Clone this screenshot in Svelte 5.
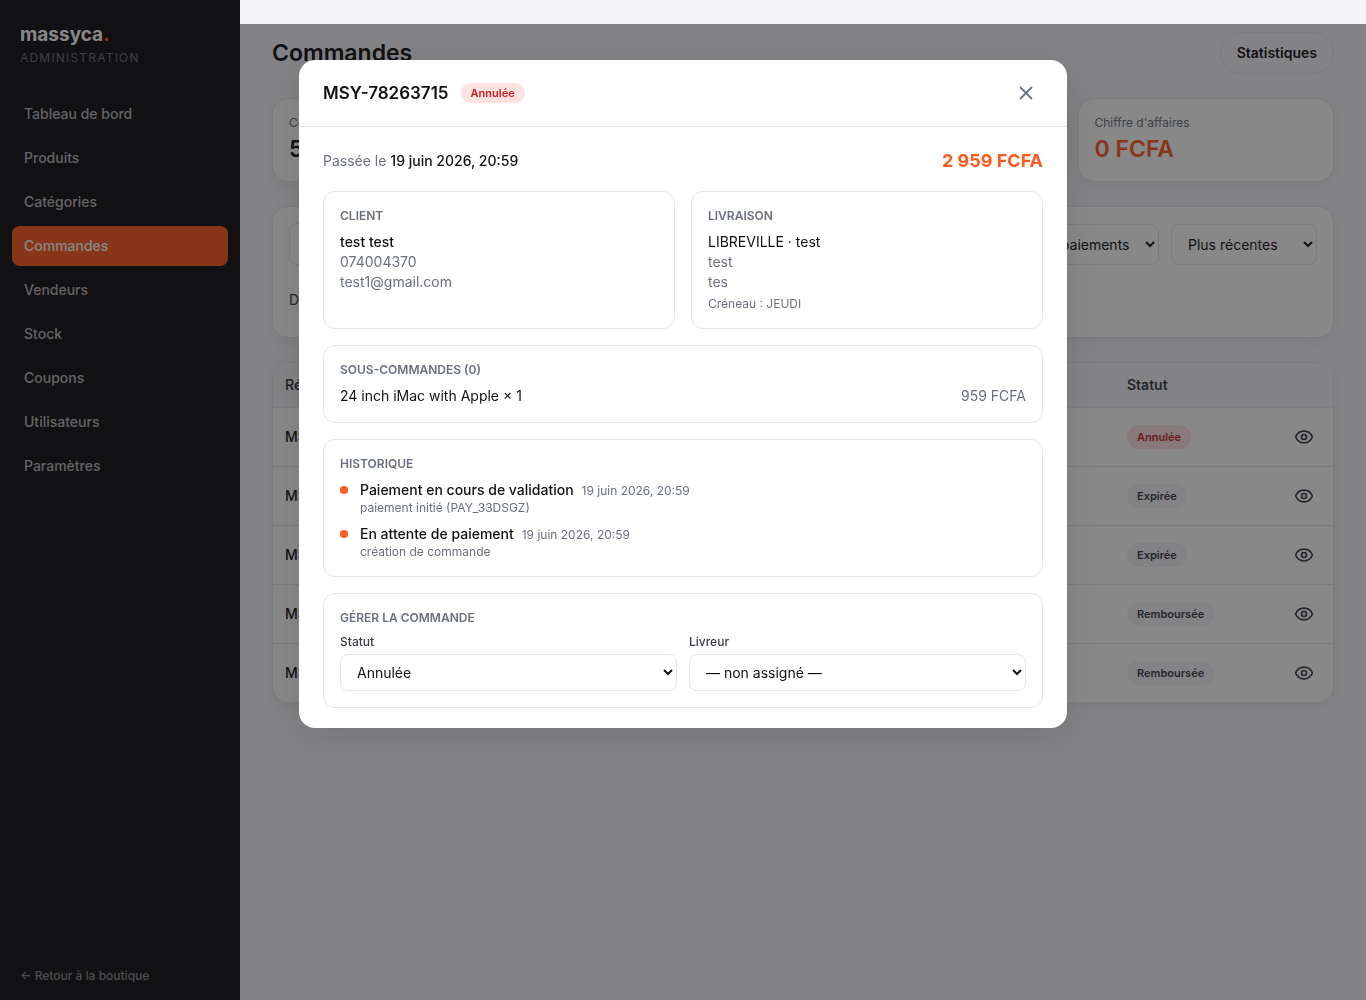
<script lang="ts">
	const navItems = [
		'Tableau de bord',
		'Produits',
		'Catégories',
		'Commandes',
		'Vendeurs',
		'Stock',
		'Coupons',
		'Utilisateurs',
		'Paramètres'
	];

	const stats = [
		{ label: 'Commandes', value: '5' },
		{ label: 'En attente', value: '0' },
		{ label: 'Livrées', value: '0' },
		{ label: "Chiffre d'affaires", value: '0 FCFA', accent: true }
	];

	const orders = [
		{ ref: 'MSY-78263715', client: 'test test', status: 'Annulée', danger: true },
		{ ref: 'MSY-78263702', client: 'test test', status: 'Expirée' },
		{ ref: 'MSY-78263698', client: 'test test', status: 'Expirée' },
		{ ref: 'MSY-78263684', client: 'test test', status: 'Remboursée' },
		{ ref: 'MSY-78263671', client: 'test test', status: 'Remboursée' }
	];

	const history = [
		{ label: 'Paiement en cours de validation', date: '19 juin 2026, 20:59', note: 'paiement initié (PAY_33DSGZ)' },
		{ label: 'En attente de paiement', date: '19 juin 2026, 20:59', note: 'création de commande' }
	];

	let active = $state('Commandes');
	let showOrder = $state(true);
	let status = $state('Annulée');
	let courier = $state('');
</script>

<div class="layout">
	<aside class="sidebar">
		<div class="brand">
			<div class="logo">massyca<span>.</span></div>
			<div class="role">Administration</div>
		</div>
		<nav>
			{#each navItems as item}
				<a href="#{item}" class:active={item === active} onclick={() => (active = item)}>{item}</a>
			{/each}
		</nav>
		<a class="back" href="#boutique">← Retour à la boutique</a>
	</aside>

	<main>
		<header class="page-head">
			<h1>Commandes</h1>
			<button class="stats-btn">Statistiques</button>
		</header>

		<section class="stats">
			{#each stats as stat}
				<div class="panel stat">
					<div class="stat-label">{stat.label}</div>
					<div class="stat-value" class:accent={stat.accent}>{stat.value}</div>
				</div>
			{/each}
		</section>

		<section class="panel filters">
			<div class="filter-row">
				<input class="search" type="search" aria-label="Rechercher" />
				<select aria-label="Statut de commande"><option>Tous les statuts</option></select>
				<select aria-label="Paiement"><option>Tous les paiements</option></select>
				<select aria-label="Tri"><option>Plus récentes</option></select>
			</div>
			<div class="filter-row dates">
				<label for="from">Du</label>
				<input id="from" type="date" />
				<label for="to">au</label>
				<input id="to" type="date" />
			</div>
		</section>

		<section class="panel table-wrap">
			<table>
				<thead>
					<tr>
						<th>Référence</th>
						<th class="col-client">Client</th>
						<th class="col-status">Statut</th>
						<th class="col-action"></th>
					</tr>
				</thead>
				<tbody>
					{#each orders as order}
						<tr>
							<td><div class="ref" title={order.ref}>{order.ref}</div></td>
							<td>{order.client}</td>
							<td><span class="badge tall" class:danger={order.danger}>{order.status}</span></td>
							<td class="action">
								<button class="eye" aria-label="Voir la commande" onclick={() => (showOrder = true)}>
									<svg width="20" height="20" viewBox="0 0 24 24">
										<path d="M2.06 12.35a1 1 0 0 1 0-.7 10.75 10.75 0 0 1 19.88 0 1 1 0 0 1 0 .7 10.75 10.75 0 0 1-19.88 0" />
										<circle cx="12" cy="12" r="3" />
									</svg>
								</button>
							</td>
						</tr>
					{/each}
				</tbody>
			</table>
		</section>
	</main>
</div>

{#if showOrder}
	<div class="overlay">
		<div class="modal" role="dialog" aria-modal="true" aria-labelledby="order-title">
			<header class="modal-head">
				<h2 id="order-title">MSY-78263715</h2>
				<span class="badge danger">Annulée</span>
				<button class="close" aria-label="Fermer" onclick={() => (showOrder = false)}>
					<svg width="22" height="22" viewBox="0 0 24 24"><path d="M18 6 6 18M6 6l12 12" /></svg>
				</button>
			</header>

			<div class="modal-body">
				<div class="summary">
					<p>Passée le <strong>19 juin 2026, 20:59</strong></p>
					<span class="amount">2 959 FCFA</span>
				</div>

				<div class="two-cols">
					<section class="card">
						<h3>Client</h3>
						<p class="name">test test</p>
						<p class="muted">074004370</p>
						<p class="muted">test1@gmail.com</p>
					</section>
					<section class="card">
						<h3>Livraison</h3>
						<p>LIBREVILLE · test</p>
						<p class="muted">test</p>
						<p class="muted">tes</p>
						<p class="slot">Créneau : JEUDI</p>
					</section>
				</div>

				<section class="card">
					<h3>Sous-commandes (0)</h3>
					<div class="line">
						<span>24 inch iMac with Apple × 1</span>
						<span class="muted">959 FCFA</span>
					</div>
				</section>

				<section class="card">
					<h3>Historique</h3>
					<ul>
						{#each history as event}
							<li>
								<span class="dot"></span>
								<div>
									<p><span class="event">{event.label}</span><span class="date">{event.date}</span></p>
									<p class="note">{event.note}</p>
								</div>
							</li>
						{/each}
					</ul>
				</section>

				<section class="card">
					<h3>Gérer la commande</h3>
					<div class="fields">
						<div class="field">
							<label for="status">Statut</label>
							<select id="status" bind:value={status}>
								<option>Annulée</option>
								<option>Expirée</option>
								<option>Remboursée</option>
							</select>
						</div>
						<div class="field">
							<label for="courier">Livreur</label>
							<select id="courier" bind:value={courier}>
								<option value="">— non assigné —</option>
							</select>
						</div>
					</div>
				</section>
			</div>
		</div>
	</div>
{/if}

<style>
	:global(body) {
		background: #f5f5f7;
		color: #111113;
		font-family: Inter, 'Liberation Sans', sans-serif;
		font-size: 14px;
		line-height: 20px;
	}

	* {
		box-sizing: border-box;
	}

	h1,
	h2,
	h3,
	p,
	ul {
		margin: 0;
		padding: 0;
	}

	button,
	input,
	select {
		font: inherit;
		color: inherit;
	}

	svg {
		display: block;
		fill: none;
		stroke: currentColor;
		stroke-width: 2;
		stroke-linecap: round;
		stroke-linejoin: round;
	}

	.layout {
		display: flex;
		min-height: 100vh;
	}

	.sidebar {
		display: flex;
		flex-direction: column;
		flex: 0 0 240px;
		background: #111113;
		color: #fff;
	}

	.brand {
		padding: 20px 20px 28px;
	}

	.logo {
		font-size: 19px;
		line-height: 30px;
		font-weight: 700;
	}

	.logo span {
		color: #ff5a1f;
	}

	.role {
		color: #6e6e73;
		font-size: 12px;
		line-height: 16px;
		letter-spacing: 0.1em;
		text-transform: uppercase;
	}

	nav {
		display: flex;
		flex-direction: column;
		flex: 1;
		gap: 4px;
		padding: 0 12px;
	}

	nav a {
		padding: 10px 12px;
		border-radius: 8px;
		color: rgba(255, 255, 255, 0.7);
		font-weight: 500;
		text-decoration: none;
	}

	nav a.active {
		background: #ff5a1f;
		color: #fff;
	}

	.back {
		padding: 16px 20px;
		color: rgba(255, 255, 255, 0.5);
		font-size: 12px;
		line-height: 16px;
		font-weight: 500;
		text-decoration: none;
	}

	main {
		display: flex;
		flex: 1;
		flex-direction: column;
		gap: 24px;
		min-width: 0;
		padding: 32px;
	}

	.page-head {
		display: flex;
		align-items: center;
		justify-content: space-between;
	}

	h1 {
		font-size: 23px;
		line-height: 32px;
		font-weight: 600;
	}

	.stats-btn {
		padding: 10px 16px;
		border: 1px solid #e6e6eb;
		border-radius: 21px;
		background: transparent;
		font-weight: 600;
	}

	.panel {
		border: 1px solid #e6e6eb;
		border-radius: 16px;
		background: #fff;
		box-shadow: 0 4px 16px rgba(17, 17, 19, 0.06);
	}

	.stats {
		display: grid;
		grid-template-columns: repeat(4, 1fr);
		gap: 12px;
	}

	.stat {
		padding: 16px;
	}

	.stat-label {
		color: #6b7080;
		font-size: 12px;
		line-height: 16px;
	}

	.stat-value {
		margin-top: 2px;
		font-size: 23px;
		line-height: 32px;
		font-weight: 600;
	}

	.accent {
		color: #ff5a1f;
	}

	.filters {
		display: flex;
		flex-direction: column;
		gap: 14px;
		padding: 16px;
	}

	.filter-row {
		display: flex;
		align-items: center;
		gap: 12px;
	}

	.filter-row input,
	.filter-row select {
		height: 42px;
		padding: 8px 12px;
		border: 1px solid #e6e6eb;
		border-radius: 8px;
		background: #fff;
	}

	.filter-row select {
		height: 41px;
		padding: 8px 12px;
	}

	.filter-row select:last-child {
		min-width: 146px;
	}

	.search {
		flex: 1;
		min-width: 0;
	}

	.dates {
		color: #3a3a42;
	}

	.table-wrap {
		overflow: hidden;
	}

	table {
		width: 100%;
		border-collapse: collapse;
		table-layout: fixed;
	}

	th {
		height: 44px;
		padding: 0 12px;
		background: #f5f5f7;
		color: #3a3a42;
		font-weight: 600;
		text-align: left;
	}

	td {
		height: 59px;
		padding: 0 12px;
		border-top: 1px solid #e6e6eb;
	}

	.ref {
		max-width: 52px;
		overflow: hidden;
		font-weight: 500;
		text-overflow: ellipsis;
		white-space: nowrap;
	}

	.col-client {
		width: 280px;
	}

	.col-status {
		width: 148px;
	}

	.col-action {
		width: 70px;
	}

	.action {
		text-align: right;
	}

	.eye {
		display: inline-flex;
		padding: 7px;
		border: 0;
		background: none;
		color: #3a3a42;
		vertical-align: middle;
	}

	.badge {
		display: inline-block;
		padding: 2px 10px;
		border-radius: 12px;
		background: #f5f5f7;
		color: #3a3a42;
		font-size: 11px;
		line-height: 16px;
		font-weight: 600;
	}

	.badge.tall {
		padding: 4px 10px;
		vertical-align: middle;
	}

	.badge.danger {
		background: #fee2e2;
		color: #c81e1e;
	}

	.overlay {
		position: fixed;
		inset: 24px 0 0;
		display: flex;
		align-items: flex-start;
		justify-content: center;
		padding: 36px 16px;
		background: rgba(17, 17, 19, 0.5);
		overflow-y: auto;
	}

	.modal {
		width: 100%;
		max-width: 768px;
		border-radius: 16px;
		background: #fff;
		box-shadow: 0 8px 32px rgba(17, 17, 19, 0.1);
	}

	.modal-head {
		display: flex;
		align-items: center;
		gap: 12px;
		padding: 16px 24px;
		border-bottom: 1px solid #e6e6e9;
	}

	h2 {
		font-size: 17px;
		line-height: 28px;
		font-weight: 600;
	}

	.close {
		display: flex;
		margin-left: auto;
		padding: 6px;
		border: 0;
		background: none;
		color: #6b7080;
	}

	.modal-body {
		display: flex;
		flex-direction: column;
		gap: 16px;
		padding: 20px 24px;
	}

	.summary {
		display: flex;
		align-items: center;
		justify-content: space-between;
		color: #6b7080;
	}

	.summary strong {
		color: #111113;
		font-weight: 500;
	}

	.amount {
		color: #ff5a1f;
		font-size: 18px;
		line-height: 28px;
		font-weight: 700;
	}

	.two-cols,
	.fields {
		display: grid;
		grid-template-columns: 1fr 1fr;
		gap: 16px;
	}

	.card {
		padding: 16px;
		border: 1px solid #e6e6e9;
		border-radius: 12px;
	}

	h3 {
		margin-bottom: 8px;
		color: #6b7080;
		font-size: 12px;
		line-height: 16px;
		font-weight: 600;
		text-transform: uppercase;
	}

	.name,
	.event {
		font-weight: 500;
	}

	.muted {
		color: #6b7080;
	}

	.slot,
	.note,
	.date {
		color: #6b7080;
		font-size: 12px;
		line-height: 16px;
	}

	.slot {
		margin-top: 4px;
	}

	.line {
		display: flex;
		justify-content: space-between;
	}

	ul {
		display: flex;
		flex-direction: column;
		gap: 8px;
		list-style: none;
	}

	li {
		display: flex;
		gap: 12px;
	}

	.dot {
		width: 8px;
		height: 8px;
		margin-top: 6px;
		border-radius: 50%;
		background: #ff5a1f;
	}

	.date {
		margin-left: 8px;
	}

	.fields {
		gap: 12px;
	}

	.field {
		display: flex;
		flex-direction: column;
		gap: 4px;
	}

	.field label {
		color: #3a3a42;
		font-size: 12px;
		line-height: 16px;
		font-weight: 500;
	}

	.field select {
		width: 100%;
		padding: 8px 12px;
		border: 1px solid #e6e6e9;
		border-radius: 8px;
		background: #fff;
	}
</style>
